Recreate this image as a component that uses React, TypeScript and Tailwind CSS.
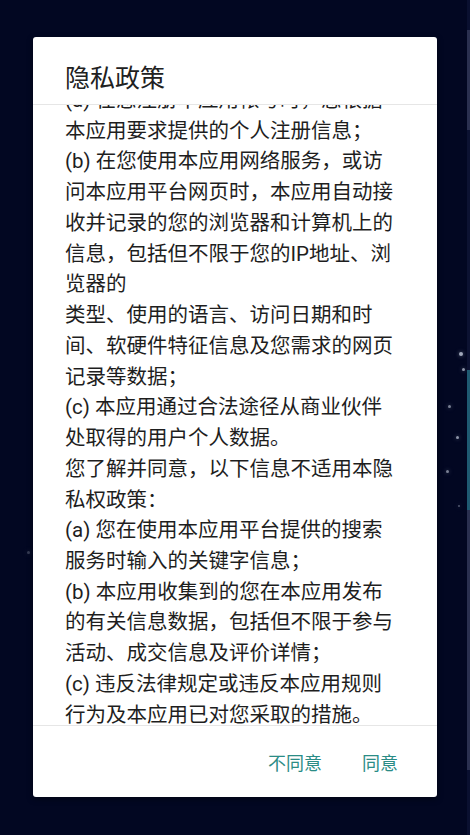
import React from "react";

const lines = [
  "(a) 在您注册本应用帐号时，您根据",
  "本应用要求提供的个人注册信息；",
  "(b) 在您使用本应用网络服务，或访",
  "问本应用平台网页时，本应用自动接",
  "收并记录的您的浏览器和计算机上的",
  "信息，包括但不限于您的IP地址、浏",
  "览器的",
  "类型、使用的语言、访问日期和时",
  "间、软硬件特征信息及您需求的网页",
  "记录等数据；",
  "(c) 本应用通过合法途径从商业伙伴",
  "处取得的用户个人数据。",
  "您了解并同意，以下信息不适用本隐",
  "私权政策：",
  "(a) 您在使用本应用平台提供的搜索",
  "服务时输入的关键字信息；",
  "(b) 本应用收集到的您在本应用发布",
  "的有关信息数据，包括但不限于参与",
  "活动、成交信息及评价详情；",
  "(c) 违反法律规定或违反本应用规则",
  "行为及本应用已对您采取的措施。",
];

const stars = [
  { x: 459, y: 352, s: 4, o: 0.8 },
  { x: 462, y: 368, s: 3, o: 0.7 },
  { x: 448, y: 405, s: 3, o: 0.6 },
  { x: 456, y: 436, s: 3, o: 0.7 },
  { x: 446, y: 470, s: 3, o: 0.6 },
  { x: 458, y: 505, s: 2, o: 0.4 },
  { x: 27, y: 551, s: 3, o: 0.25 },
];

export default function App() {
  return (
    <div
      className="relative w-[470px] h-[835px] overflow-hidden bg-[#020722]"
      style={{ fontFamily: 'Roboto, "Noto Sans CJK SC", "Noto Sans", sans-serif' }}
    >
      {stars.map((st, i) => (
        <div
          key={i}
          className="absolute rounded-full bg-[#c8d0e0]"
          style={{ left: st.x, top: st.y, width: st.s, height: st.s, opacity: st.o, boxShadow: "0 0 4px rgba(200,210,230,0.6)" }}
        />
      ))}
      <div className="absolute right-0 top-0 w-[3px] h-[835px] flex flex-col">
        <div className="h-[30px] bg-[#0a1030]" />
        <div className="h-[100px] bg-[#2a3050]" />
        <div className="h-[240px] bg-[#0c1232]" />
        <div className="h-[140px] bg-[#1f5a72]" />
        <div className="h-[260px] bg-[#2a3050]" />
        <div className="flex-1 bg-[#0a1030]" />
      </div>

      <div className="pt-[37px] pl-[33px]">
        <div className="w-[404px] h-[760px] bg-white rounded-[3px] flex flex-col shadow-[0_2px_6px_rgba(0,0,0,0.4)]">
          <div className="h-[67px] flex items-center pl-[32px] pt-[16px]">
            <span className="text-[25px] leading-none text-[#212121]">隐私政策</span>
          </div>
          <div className="h-[622px] overflow-hidden border-t border-b border-[#e6e6e6] pl-[32px]">
            <div className="-mt-[20px]">
              {lines.map((l, i) => (
                <div key={i} className="text-[20.5px] leading-[30.74px] text-[#1e1e1e] whitespace-nowrap">
                  {l}
                </div>
              ))}
            </div>
          </div>
          <div className="flex-1 flex items-center justify-end pr-[39px] gap-[40px] pt-[4px]">
            <span className="text-[18px] text-[#2b8c86]">不同意</span>
            <span className="text-[18px] text-[#2b8c86]">同意</span>
          </div>
        </div>
      </div>
    </div>
  );
}
